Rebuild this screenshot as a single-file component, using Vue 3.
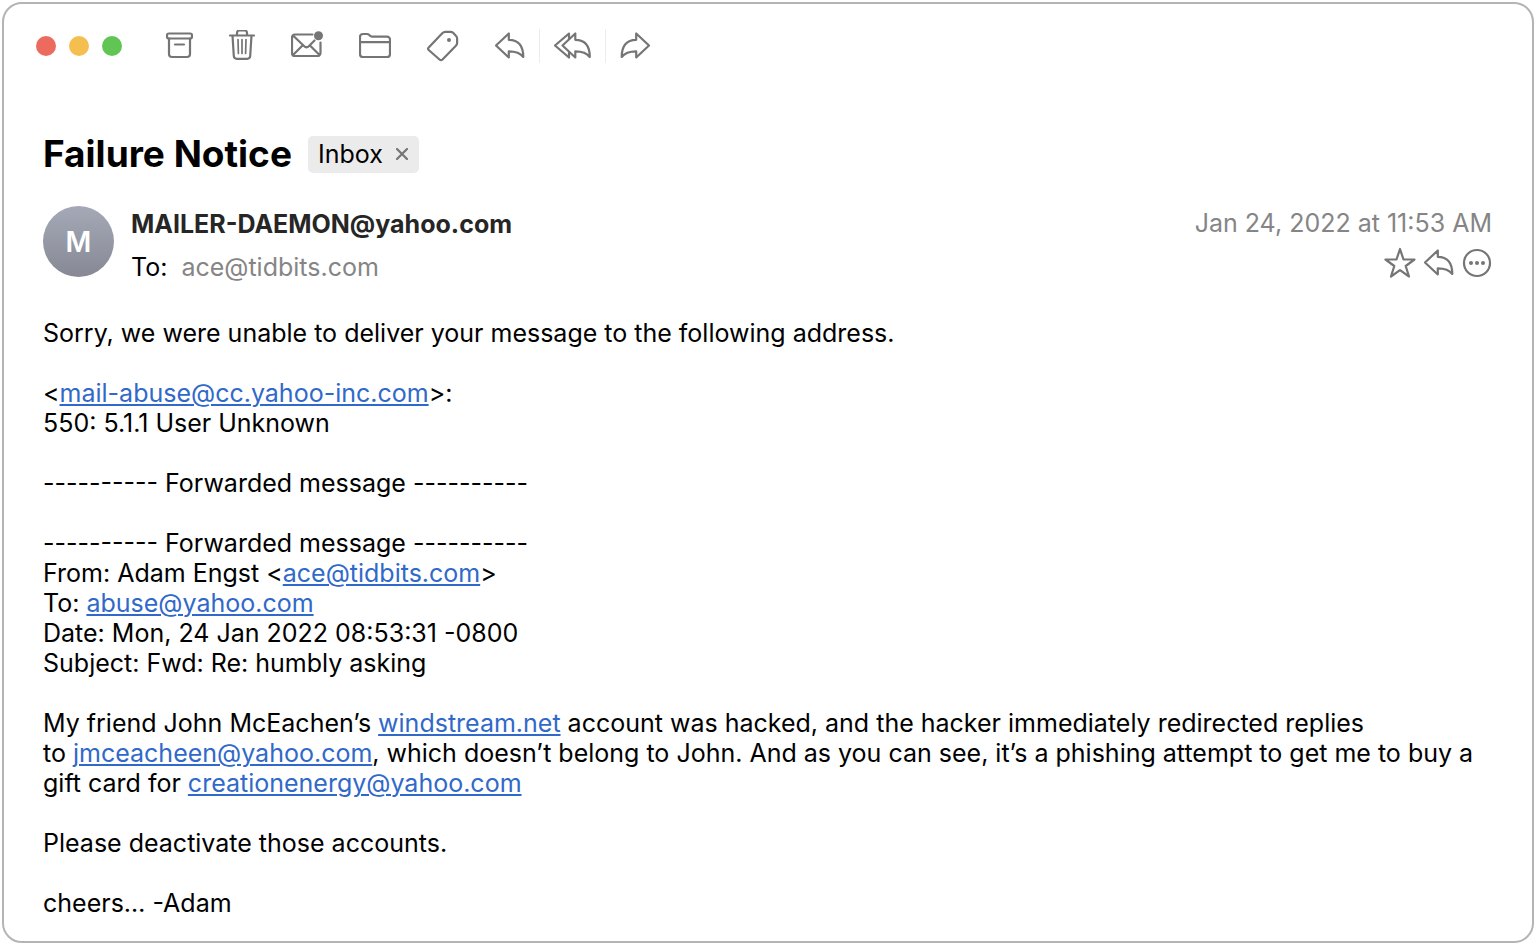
<script setup>
const lights = ['close', 'minimize', 'zoom'];
</script>

<template>
  <main class="mail-window">
    <header class="toolbar">
      <div class="toolbar__lights">
        <button
          v-for="light in lights"
          :key="light"
          type="button"
          :class="['light', `light--${light}`]"
          :aria-label="light"
        />
      </div>

      <div class="toolbar__actions">
        <button type="button" class="icon-button" aria-label="Archive">
          <svg width="27" height="32" viewBox="0 0 27 32">
            <rect x="1" y="3.5" width="25" height="5" rx="1.8" />
            <path d="M3 8.5V24a3 3 0 0 0 3 3h15a3 3 0 0 0 3-3V8.5M9 14.500h9" />
          </svg>
        </button>
        <button type="button" class="icon-button" aria-label="Delete">
          <svg width="26" height="32" viewBox="0 0 26 32">
            <path d="M1 5.5h24M8 5.500V3a2.500 2.500 0 0 1 2.500-2.500h5A2.500 2.500 0 0 1 18 3v2.500M3.500 5.500l1.300 20.500a3 3 0 0 0 3 2.800h10.400a3 3 0 0 0 3-2.800L22.500 5.500" />
            <path class="icon-thin" d="M9 9.500l.4 14M13 9.500v14M17 9.500l-.4 14" />
          </svg>
        </button>
        <button type="button" class="icon-button" aria-label="Mark as unread">
          <svg width="32" height="32" viewBox="0 0 32 32">
            <path d="M21.500 4.500H4a3 3 0 0 0-3 3V23a3 3 0 0 0 3 3h22.500a3 3 0 0 0 3-3V12.500M2 5.500l11 10.500q2.500 2.500 5 0l5.500-5.500M2 25l9-9M28.500 25l-9-9" />
            <circle class="icon-fill" cx="27.500" cy="5.800" r="4.500" />
          </svg>
        </button>
        <button type="button" class="icon-button" aria-label="Move to folder">
          <svg width="32" height="32" viewBox="0 0 32 32">
            <path d="M1 24V7a3 3 0 0 1 3-3h4q1.200 0 2 .8l1 1q.8.800 2 .8H28a3 3 0 0 1 3 3V24a3 3 0 0 1-3 3H4a3 3 0 0 1-3-3zM1 12.200h30" />
          </svg>
        </button>
        <button type="button" class="icon-button" aria-label="Label">
          <svg width="32" height="32" viewBox="0 0 32 32">
            <path d="M1.700 17.500 15.500 3q1.200-1.200 2.800-1.200h5.200q1.600 0 2.600 1l3 3.200q1 1 1 2.600V13q0 1.600-1.200 2.800L15.500 29.500q-1.500 1.300-3 0L1.700 20q-1.200-1.200 0-2.500z" />
            <circle class="icon-fill" cx="22" cy="10" r="2" />
          </svg>
        </button>
        <div class="toolbar__replies">
          <button type="button" class="icon-button" aria-label="Reply">
            <svg width="30" height="32" viewBox="0 0 30 32">
              <path d="M1 15.500 13.800 3.500v6.300c9.700 0 14.500 6 14.500 17.200C25 22.500 20 21.300 13.800 21.300V27.500z" />
            </svg>
          </button>
          <span class="toolbar__divider" />
          <button type="button" class="icon-button" aria-label="Reply all">
            <svg width="37" height="32" viewBox="0 0 37 32">
              <path d="M15 8.500v-5L1 15.500l14 12v-5" />
              <path d="M8.500 15.500 21.300 3.500v6.300c9.700 0 14.500 6 14.500 17.200C32.500 22.500 27.500 21.300 21.300 21.300V27.500z" />
            </svg>
          </button>
          <span class="toolbar__divider" />
          <button type="button" class="icon-button" aria-label="Forward">
            <svg width="30" height="32" viewBox="0 0 30 32">
              <path d="M29 15.500 16.200 3.500v6.300C6.500 9.800 1.700 15.800 1.700 27 5 22.500 10 21.300 16.200 21.300V27.500z" />
            </svg>
          </button>
        </div>
      </div>
    </header>

    <article class="message">
      <div class="message__title">
        <h1>Failure Notice</h1>
        <span class="tag">
          Inbox
          <button type="button" class="tag__remove" aria-label="Remove Inbox label">
            <svg width="12" height="12" viewBox="0 0 12 12">
              <path d="M1 1l10 10M11 1 1 11" />
            </svg>
          </button>
        </span>
      </div>

      <div class="message__head">
        <div class="avatar">M</div>
        <div class="people">
          <div class="people__from">MAILER-DAEMON@yahoo.com</div>
          <div class="people__to">
            <span>To:</span>
            <span class="people__address">ace@tidbits.com</span>
          </div>
        </div>
        <div class="meta">
          <time datetime="2022-01-24T11:53">Jan 24, 2022 at 11:53 AM</time>
          <div class="meta__actions">
            <button type="button" class="icon-button" aria-label="Star">
              <svg width="32" height="32" viewBox="0 0 32 32">
                <path d="M16 2l3.500 10.500H30.500L21.700 19 25 29.500 16 23.200 7 29.500 10.300 19 1.500 12.500H12.500z" />
              </svg>
            </button>
            <button type="button" class="icon-button" aria-label="Reply to sender">
              <svg width="30" height="32" viewBox="0 0 30 32">
                <path d="M1 15.500 13.800 3.500v6.300c9.700 0 14.500 6 14.500 17.200C25 22.500 20 21.300 13.800 21.300V27.500z" />
              </svg>
            </button>
            <button type="button" class="icon-button" aria-label="More">
              <svg width="30" height="32" viewBox="0 0 30 32">
                <circle cx="15" cy="16" r="13" />
                <circle class="icon-fill" cx="9" cy="16" r="2" />
                <circle class="icon-fill" cx="15" cy="16" r="2" />
                <circle class="icon-fill" cx="21" cy="16" r="2" />
              </svg>
            </button>
          </div>
        </div>
      </div>

      <div class="message__body">
        <p>Sorry, we were unable to deliver your message to the following address.</p>
        <p>
          &lt;<a href="mailto:mail-abuse@cc.yahoo-inc.com">mail-abuse@cc.yahoo-inc.com</a>&gt;:<br>
          550: 5.1.1 User Unknown
        </p>
        <p>---------- Forwarded message ----------</p>
        <p>
          ---------- Forwarded message ----------<br>
          From: Adam Engst &lt;<a href="mailto:ace@tidbits.com">ace@tidbits.com</a>&gt;<br>
          To: <a href="mailto:abuse@yahoo.com">abuse@yahoo.com</a><br>
          Date: Mon, 24 Jan 2022 08:53:31 -0800<br>
          Subject: Fwd: Re: humbly asking
        </p>
        <p>
          My friend John McEachen’s <a href="http://windstream.net">windstream.net</a> account was hacked, and the hacker immediately redirected replies
          to&nbsp;<a href="mailto:jmceacheen@yahoo.com">jmceacheen@yahoo.com</a>, which doesn’t belong to John. And as you can see, it’s a phishing attempt to get me to buy a gift card for <a href="mailto:creationenergy@yahoo.com">creationenergy@yahoo.com</a>
        </p>
        <p>Please deactivate those accounts.</p>
        <p>cheers… -Adam</p>
      </div>
    </article>
  </main>
</template>

<style>
body {
  background: #fff;
}
</style>

<style scoped>
.mail-window {
  box-sizing: border-box;
  min-height: calc(100vh - 4px);
  margin: 2px;
  padding: 24px 40px 20px 32px;
  border: 2px solid #b4b4b4;
  border-radius: 20px;
  background: #fff;
  color: #000;
  font-family: Inter, 'Liberation Sans', sans-serif;
  font-size: 25px;
  line-height: 30px;
}

button {
  padding: 0;
  border: 0;
  background: none;
  font: inherit;
}

svg {
  display: block;
  fill: none;
  stroke: #757575;
  stroke-width: 2.2;
  stroke-linecap: round;
  stroke-linejoin: round;
}

.icon-fill {
  fill: #757575;
  stroke: none;
}

.icon-thin {
  stroke-width: 1.7;
}

.toolbar {
  display: flex;
  height: 36px;
  align-items: center;
  gap: 44px;
}

.toolbar__lights {
  display: flex;
  gap: 13px;
}

.light {
  width: 20px;
  height: 20px;
  border-radius: 50%;
}

.light--close {
  background: #ec6a5e;
}

.light--minimize {
  background: #f4bf4f;
}

.light--zoom {
  background: #61c554;
}

.toolbar__actions {
  display: flex;
  align-items: center;
  gap: 36px;
}

.toolbar__replies {
  display: flex;
  align-items: center;
  gap: 14px;
}

.toolbar__divider {
  width: 1px;
  height: 34px;
  background: #ececec;
}

.message {
  padding: 70px 0 0 7px;
}

.message__title {
  display: flex;
  align-items: center;
  gap: 16px;
}

h1 {
  margin: 0;
  font-size: 37px;
  font-weight: 700;
  line-height: 40px;
}

.tag {
  display: flex;
  height: 37px;
  align-items: center;
  gap: 13px;
  padding: 0 11px 0 10px;
  border-radius: 5px;
  background: #ebebeb;
}

.message__head {
  display: flex;
  gap: 17px;
  margin-top: 32px;
}

.avatar {
  display: flex;
  width: 71px;
  height: 71px;
  align-items: center;
  justify-content: center;
  border-radius: 50%;
  background: linear-gradient(180deg, #a5a9b7 0%, #868994 100%);
  color: #fff;
  font-size: 28px;
  font-weight: 600;
}

.people {
  display: flex;
  flex: 1;
  flex-direction: column;
  gap: 13px;
  padding-top: 3px;
}

.people__from {
  color: #262626;
  font-weight: 700;
}

.people__to {
  display: flex;
  gap: 14px;
}

.people__address,
.meta {
  color: #858585;
}

.meta {
  display: flex;
  flex-direction: column;
  align-items: flex-end;
  gap: 9px;
  padding-top: 2px;
}

.meta__actions {
  display: flex;
  gap: 8px;
}

.message__body {
  margin-top: 36px;
}

.message__body p {
  margin: 0 0 30px;
}

.message__body p:last-child {
  margin-bottom: 0;
}

.message__body a {
  color: #3069c9;
  text-decoration: underline;
  text-decoration-thickness: 2px;
  text-underline-offset: 2px;
}
</style>
